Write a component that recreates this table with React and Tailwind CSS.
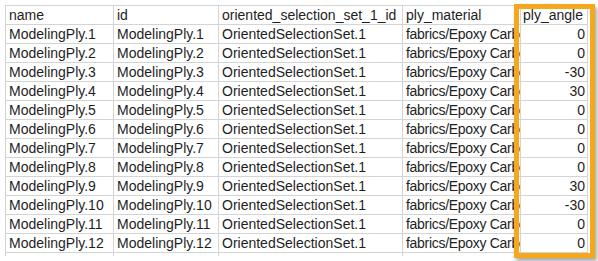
import React from "react";

const rows = [
  ["ModelingPly.1", 0],
  ["ModelingPly.2", 0],
  ["ModelingPly.3", -30],
  ["ModelingPly.4", 30],
  ["ModelingPly.5", 0],
  ["ModelingPly.6", 0],
  ["ModelingPly.7", 0],
  ["ModelingPly.8", 0],
  ["ModelingPly.9", 30],
  ["ModelingPly.10", -30],
  ["ModelingPly.11", 0],
  ["ModelingPly.12", 0],
];

const cell =
  "h-[19px] border-r border-b border-[#d4d4d4] overflow-hidden whitespace-nowrap leading-[18px]";

function Row({ cells, header }) {
  return (
    <div className="flex">
      <div className={`${cell} w-[108px] pl-[3px]`}>{cells[0]}</div>
      <div className={`${cell} w-[105px] pl-[3px]`}>{cells[1]}</div>
      <div className={`${cell} w-[184px] pl-[3px]`}>{cells[2]}</div>
      <div className={`${cell} w-[118px] pl-[3px] ${header ? "" : "tracking-[-0.3px]"}`}>{cells[3]}</div>
      <div
        className={`${cell} w-[67px] ${header ? "pl-[2px] text-left" : "pr-[2px] text-right"}`}
      >
        {cells[4]}
      </div>
    </div>
  );
}

export default function App() {
  return (
    <div className="relative w-[598px] h-[261px] overflow-hidden bg-white text-[14px] text-[#1e1e1e] font-['Liberation_Sans',Arial,sans-serif]">
      <div className="pt-[5px] pl-[5px]">
        <div className="border-l border-t border-[#d4d4d4] w-[583px]">
          <Row
            header
            cells={["name", "id", "oriented_selection_set_1_id", "ply_material", "ply_angle"]}
          />
          {rows.map(([n, a]) => (
            <Row
              key={n}
              cells={[n, n, "OrientedSelectionSet.1", "fabrics/Epoxy Carbon Woven (230 GPa) Prepreg", String(a)]}
            />
          ))}
          <div className="flex h-[3px]">
            <div className="w-[108px] border-r border-[#d4d4d4]" />
            <div className="w-[105px] border-r border-[#d4d4d4]" />
            <div className="w-[184px] border-r border-[#d4d4d4]" />
            <div className="w-[118px] border-r border-[#d4d4d4]" />
            <div className="w-[67px] border-r border-[#d4d4d4]" />
          </div>
        </div>
      </div>
      <div className="absolute left-[514px] top-[4px] w-[81px] h-[254px] border-[5px] border-[#f5a81e] shadow-[2px_3px_4px_rgba(0,0,0,0.35)]" />
    </div>
  );
}
